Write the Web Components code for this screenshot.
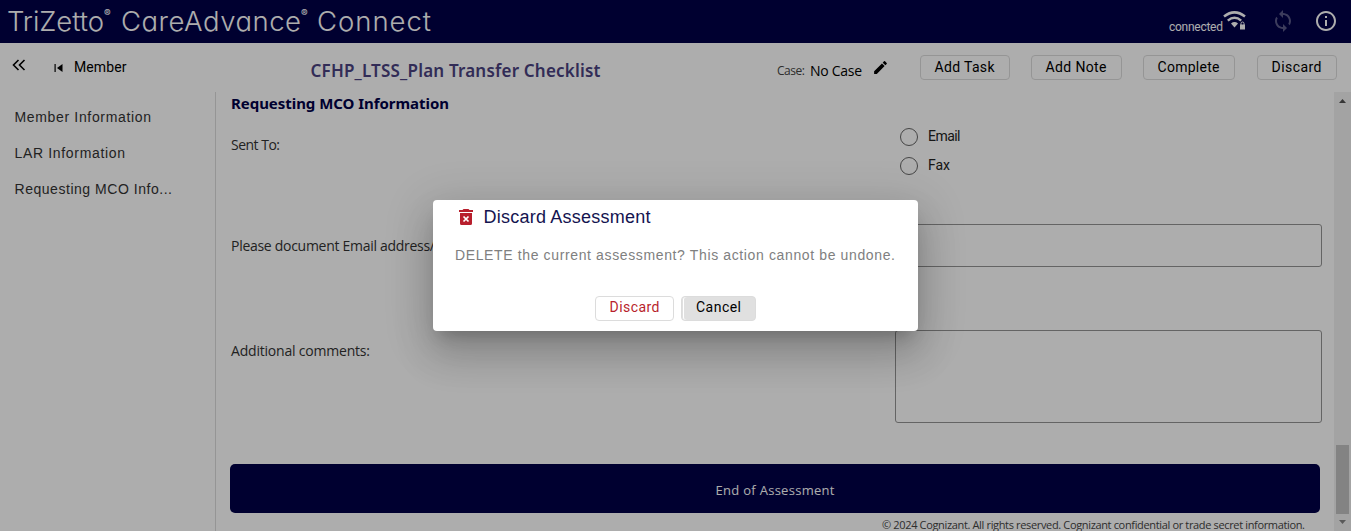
<!DOCTYPE html>
<html lang="en">
<head>
<meta charset="utf-8">
<title>CareAdvance Connect</title>
<style>
html,body{margin:0;height:100%;overflow:hidden;background:#fff}
body{font-family:"Liberation Sans",Arial,sans-serif}
</style>
</head>
<body>
<care-app></care-app>
<script>
const define = (name, html, after) => customElements.define(name, class extends HTMLElement {
  connectedCallback() {
    if (this.shadowRoot) return;
    const t = document.createElement('template');
    t.innerHTML = html;
    this.attachShadow({mode: 'open'}).append(t.content.cloneNode(true));
    if (after) after(this);
  }
});

// A single line of text tracked out (or in) to the width given by its "w" attribute.
define('fit-text', `<style>:host{display:block;white-space:pre;flex:none}span{display:inline-block}</style><span><slot></slot></span>`, el => {
  const span = el.shadowRoot.querySelector('span');
  const w = parseFloat(el.getAttribute('w'));
  const n = el.textContent.length;
  span.style.letterSpacing = '0px';
  const natural = span.getBoundingClientRect().width;
  if (w && n > 1 && natural) span.style.letterSpacing = ((w - natural) / (n - 1)).toFixed(4) + 'px';
  el.style.width = w + 'px';
});

define('ui-button', `<style>
:host{display:flex;box-sizing:border-box;height:25px;border:1px solid #dcdcdc;border-radius:4px;align-items:center;justify-content:center;font:14px/23px Roboto,sans-serif;color:#000;flex:none}
:host([tone=danger]){color:#b81f2d}
:host([tone=grey]){background:#e0e0e0;box-shadow:inset 1px 0 #e0e0e0,inset 2px 0 #fff}
:host([tone]){padding-bottom:2px}
</style><slot></slot>`);

define('app-header', `<style>
:host{display:flex;box-sizing:border-box;height:43px;background:#000048;color:#fff;align-items:flex-start;padding-left:7px}
.logo{display:flex;font:300 27.500px/34px Inter,sans-serif;font-feature-settings:"cv11" 1;padding-top:4px;flex:1}
.r{font:600 10px/14px Inter,sans-serif;padding-top:2px}
.gap{width:8px}
.conn{font:12px/14px Roboto,sans-serif;padding-top:20px}
svg{display:block;flex:none}
.wifi{margin:9px 0 0 0}.sync{margin:9px 0 0 24px;opacity:.35}.info{margin:9px 13px 0 19px}
</style>
<div class="logo"><fit-text w="97">TriZetto</fit-text><fit-text class="r" w="9">®</fit-text><div class="gap"></div><fit-text w="180">CareAdvance</fit-text><fit-text class="r" w="8">®</fit-text><div class="gap"></div><fit-text w="114">Connect</fit-text></div>
<fit-text class="conn" w="54">connected</fit-text>
<svg class="wifi" width="24" height="24" viewBox="0 0 24 24" fill="none" stroke="#fff"><path d="M1 7.500Q11.500-.8 22 7.500M4.800 11.600Q11.500 6 18.200 11.600" stroke-width="2.500"/><path d="M8 14.500Q11.500 11.700 15 14.500L11.500 18.500Z" fill="#fff" stroke="none"/><path d="M17 15.500h5v5h-5z" fill="#fff" stroke="none"/><path d="M18 16v-1.500a1.500 1.500 0 0 1 3 0V16"/></svg>
<svg class="sync" width="24" height="24" viewBox="0 0 24 24" fill="#fff"><path d="M12 4V1L8 5l4 4V6c3.310 0 6 2.690 6 6 0 1.010-.25 1.970-.7 2.800l1.460 1.460A7.930 7.930 0 0 0 20 12c0-4.420-3.580-8-8-8zm0 14c-3.310 0-6-2.690-6-6 0-1.010.25-1.970.7-2.800L5.240 7.740A7.930 7.930 0 0 0 4 12c0 4.420 3.580 8 8 8v3l4-4-4-4v3z"/></svg>
<svg class="info" width="24" height="24" viewBox="0 0 24 24" fill="#fff"><path d="M11 7h2v2h-2zm0 4h2v6h-2zm1-9C6.480 2 2 6.480 2 12s4.480 10 10 10 10-4.480 10-10S17.520 2 12 2zm0 18c-4.410 0-8-3.590-8-8s3.590-8 8-8 8 3.590 8 8-3.590 8-8 8z"/></svg>`);

define('app-toolbar', `<style>
:host{display:flex;box-sizing:border-box;height:49px;align-items:flex-start;color:#000;padding-left:12px}
svg{display:block;flex:none}
.mem{font:14px/20px Roboto,sans-serif;margin:14px 0 0 10px}
.title{font:600 17px/24px "Noto Sans",sans-serif;color:#4a4280;margin:16px 0 0 184px}
.lab{font:12px/20px "Open Sans",sans-serif;color:#444;margin:18px 0 0 176.500px}
.case{font:14px/20px "Open Sans",sans-serif;margin:18px 0 0 5px}
ui-button{margin-top:12px}
</style>
<svg style="margin-top:16px" width="14" height="12" viewBox="0 0 14 12" fill="none" stroke="#000" stroke-width="1.600"><path d="M6.500 1L1.500 6l5 5M12.500 1l-5 5 5 5"/></svg>
<svg style="margin:20px 0 0 28px" width="10" height="10" viewBox="0 0 10 10"><path d="M.5 1h1.200v8H.5zM8.500 1v8L3 5z"/></svg>
<fit-text class="mem" w="52.500">Member</fit-text>
<fit-text class="title" w="290">CFHP_LTSS_Plan Transfer Checklist</fit-text>
<fit-text class="lab" w="28">Case:</fit-text>
<fit-text class="case" w="52">No Case</fit-text>
<svg style="margin:16px 0 0 10px" width="17" height="17" viewBox="0 0 24 24"><path d="M3 17.250V21h3.750L17.810 9.940l-3.750-3.750L3 17.250zM20.710 7.040a1 1 0 0 0 0-1.410l-2.340-2.340a1 1 0 0 0-1.410 0l-1.830 1.830 3.750 3.750 1.830-1.830z"/></svg>
<ui-button style="width:90px;margin-left:30.500px"><fit-text w="60">Add Task</fit-text></ui-button>
<ui-button style="width:91px;margin-left:21px"><fit-text w="61">Add Note</fit-text></ui-button>
<ui-button style="width:92px;margin-left:21px"><fit-text w="62">Complete</fit-text></ui-button>
<ui-button style="width:80px;margin-left:22px"><fit-text w="50">Discard</fit-text></ui-button>`);

define('side-nav', `<style>
:host{display:block;box-sizing:border-box;width:216px;border-right:1px solid #dcdcdc;padding:7px 0 0 14.500px;font:14px/36px "Liberation Sans",Arial,sans-serif;color:#333;flex:none}
</style><fit-text w="136.500">Member Information</fit-text><fit-text w="110.500">LAR Information</fit-text><fit-text w="157.500">Requesting MCO Info...</fit-text>`);

define('radio-option', `<style>
:host{display:flex;height:29px;align-items:flex-start;font:14px/18px Roboto,sans-serif;color:#222}
i{box-sizing:border-box;width:18px;height:18px;border:1px solid #666;border-radius:50%;margin-right:10px}
</style><i></i><slot></slot>`);

define('form-row', `<style>
:host{display:grid;grid-template-columns:665px 427px;box-sizing:border-box}
.l{font:14px/20px "Open Sans",sans-serif;color:#333}
</style><div class="l"><slot name="label"></slot></div><div><slot></slot></div>`);

define('assessment-form', `<style>
:host{display:block;flex:1;min-width:0;padding-left:14px;color:#222}
h2{font:700 15px/22px "Noto Sans",sans-serif;color:#000048;margin:0 0 0 1px}
.sent{margin-top:14px;height:96px}
.box{box-sizing:border-box;border:1px solid #949494;border-radius:3px;width:427px}
.end{display:flex;align-items:center;justify-content:center;width:1090px;height:49px;background:#000048;border-radius:5px;color:#fff;font:13px/20px "Open Sans",sans-serif;margin-top:41px;padding-top:3px;box-sizing:border-box}
.copy{font:11px/14px "Open Sans",sans-serif;color:#444;margin:5px 0 0 652px}
radio-option{margin-left:5px}
radio-option fit-text{margin-top:-1px}
</style>
<h2><fit-text w="218">Requesting MCO Information</fit-text></h2>
<form-row class="sent"><fit-text slot="label" w="49" style="margin:7px 0 0 1px">Sent To:</fit-text>
<radio-option><fit-text w="32.500">Email</fit-text></radio-option><radio-option><fit-text w="22">Fax</fit-text></radio-option></form-row>
<form-row style="height:106px"><fit-text slot="label" w="204" style="margin:12px 0 0 1px">Please document Email address/</fit-text><div class="box" style="height:43px"></div></form-row>
<form-row style="height:93px"><fit-text slot="label" w="139" style="margin:11px 0 0 1px">Additional comments:</fit-text><div class="box" style="height:93px"></div></form-row>
<div class="end"><fit-text w="119">End of Assessment</fit-text></div>
<fit-text class="copy" w="423">© 2024 Cognizant. All rights reserved. Cognizant confidential or trade secret information.</fit-text>`);

define('scroll-rail', `<style>
:host{display:flex;flex-direction:column;width:17px;background:#f1f1f1;align-items:center;flex:none}
.t{width:13px;height:69px;background:#c1c1c1;margin-top:342px}
svg{display:block}
</style><svg style="margin-top:7px" width="7" height="4"><path d="M0 4L3.500 0 7 4z" fill="#505050"/></svg><div class="t"></div><svg style="margin-top:6px" width="7" height="4"><path d="M0 0h7L3.500 4z" fill="#848484"/></svg>`);

define('confirm-dialog', `<style>
:host{display:block;box-sizing:border-box;width:485px;height:131px;margin:200px 0 0 433px;background:#fff;border-radius:4px;box-shadow:0 11px 15px -7px rgba(0,0,0,.2),0 24px 38px 3px rgba(0,0,0,.14),0 9px 46px 8px rgba(0,0,0,.12)}
.h{display:flex;padding:5px 0 0 26px;height:24px;font:18px/24px "Liberation Sans",Arial,sans-serif;color:#141450}
svg{display:block;margin-top:4px}
.h fit-text{margin-left:10.500px}
.m{font:14px/20px "Liberation Sans",Arial,sans-serif;color:#808080;margin:16px 0 0 22px}
.b{display:flex;padding:31px 0 0 162px;gap:7px}
</style>
<div class="h"><svg width="14" height="17" viewBox="0 0 14 17"><path d="M0 1h3.500l1-1h5l1 1H14v2H0zM1 4h12v10.500q0 1.500-1.500 1.500h-9Q1 16 1 14.500z" fill="#b81f2d"/><path d="M4.500 7.500l5 5m0-5l-5 5" stroke="#fff" stroke-width="1.700"/></svg><fit-text w="167">Discard Assessment</fit-text></div>
<fit-text class="m" w="440">DELETE the current assessment? This action cannot be undone.</fit-text>
<div class="b"><ui-button tone="danger" style="width:79px"><fit-text w="50">Discard</fit-text></ui-button><ui-button tone="grey" style="width:75px"><fit-text w="45">Cancel</fit-text></ui-button></div>`);

define('care-app', `<style>
:host{display:flex;flex-direction:column;height:531px;width:1351px;overflow:hidden}
.body{display:flex;flex:1;min-height:0}
.overlay{position:absolute;inset:0;background:rgba(0,0,0,.32);overflow:hidden;display:flex;align-items:flex-start}
</style>
<app-header></app-header><app-toolbar></app-toolbar>
<div class="body"><side-nav></side-nav><assessment-form></assessment-form><scroll-rail></scroll-rail></div>
<div class="overlay"><confirm-dialog></confirm-dialog></div>`);
</script>
</body>
</html>
